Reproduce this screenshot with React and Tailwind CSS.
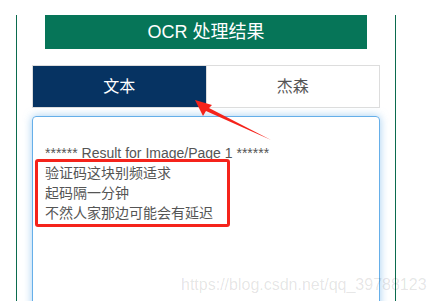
const lines = [
  "",
  "****** Result for Image/Page 1 ******",
  "验证码这块别频适求",
  "起码隔一分钟",
  "不然人家那边可能会有延迟",
];

const OcrResult = () => {
  return (
    <div
      className="relative h-[301px] w-[434px] overflow-hidden bg-white"
      style={{ fontFamily: '"Liberation Sans", Arial, "Noto Sans CJK SC", sans-serif' }}
    >
      <div className="ml-4 h-full w-[380px] border-x border-[#0b6b4e] px-[15px]">
        <div className="mx-[13px] mt-[15px] flex h-[34px] items-center justify-center bg-[#067558] text-[18px] text-white">
          OCR 处理结果
        </div>
        <div className="mt-4 flex h-[43px] border border-[#dddddd]">
          <div className="flex flex-1 items-center justify-center bg-[#063362] text-base text-white">
            文本
          </div>
          <div className="flex flex-1 items-center justify-center border-l border-[#dddddd] bg-white text-base text-[#555555]">
            杰森
          </div>
        </div>
        <div className="mt-2 h-[220px] rounded border border-[#66afe9] px-3 py-1.5 text-sm leading-5 text-[#555555] shadow-[0_0_8px_rgba(102,175,233,0.6)]">
          {lines.map((line, index) => (
            <div key={index} className="h-5 whitespace-pre">
              {line}
            </div>
          ))}
        </div>
      </div>

      {/* annotation box */}
      <div className="absolute left-[35px] top-[159px] h-[68px] w-[195px] rounded-[3px] border-[3px] border-[#f5231b]" />

      {/* annotation arrow */}
      <svg className="absolute left-0 top-0" width="434" height="301" viewBox="0 0 434 301">
        <polygon
          points="195,100 212,105 209,108 271,140 206,111 203,116"
          fill="#f5231b"
        />
      </svg>

      <div className="absolute left-[181px] top-[273px] text-base text-[rgba(0,0,0,0.11)]">
        https://blog.csdn.net/qq_39788123
      </div>
    </div>
  );
};

export default function App() {
  return <OcrResult />;
}
